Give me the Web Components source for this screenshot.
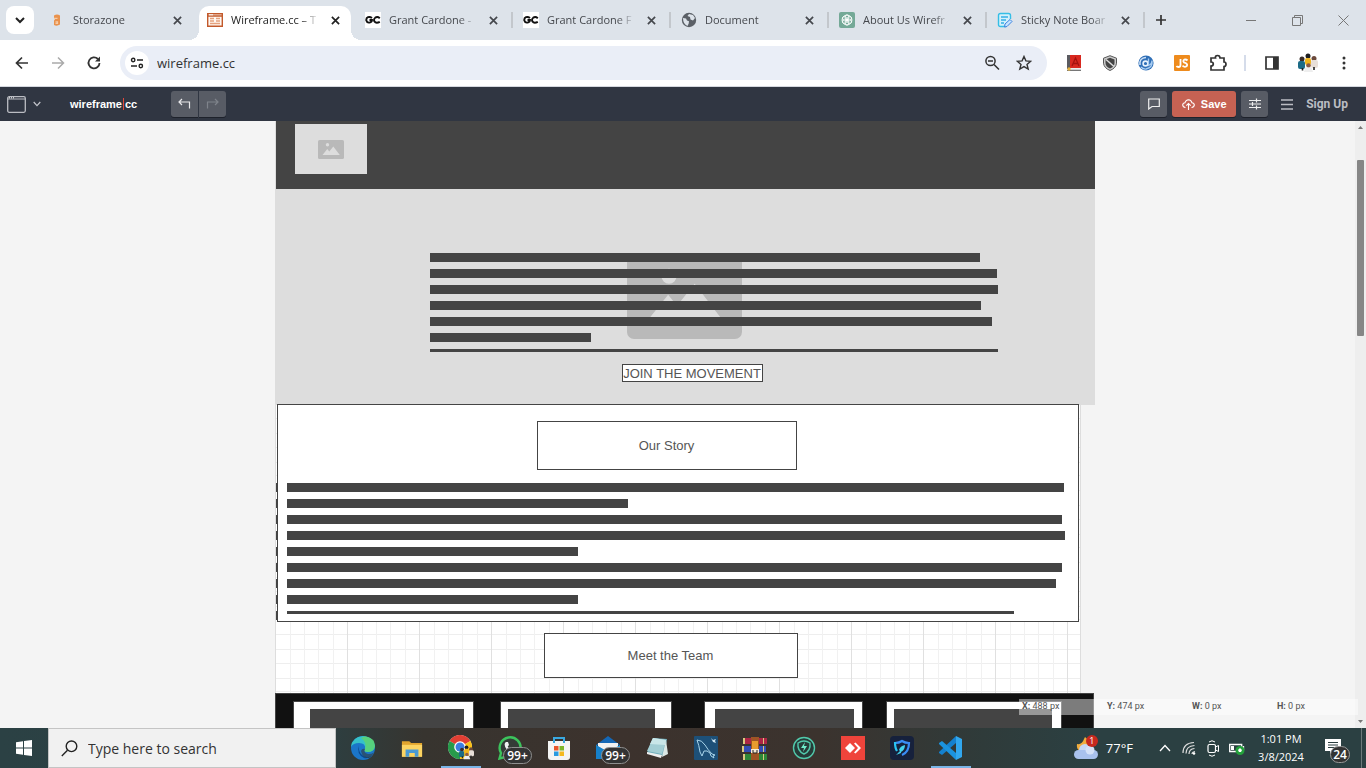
<!DOCTYPE html>
<html lang="en">
<head>
<meta charset="utf-8">
<title>Wireframe.cc</title>
<style>
html,body{margin:0;height:100%}
body{overflow:hidden;font-family:"Open Sans","Noto Sans",sans-serif;font-size:11px;color:#333}
desktop-shell{height:100vh}
</style>
</head>
<body>
<desktop-shell>
  <tab-strip slot="browser">
    <browser-tab icon="storazone">Storazone</browser-tab>
    <browser-tab icon="wire" active>Wireframe.cc – T</browser-tab>
    <browser-tab icon="gc" sep>Grant Cardone -</browser-tab>
    <browser-tab icon="gc" sep>Grant Cardone F</browser-tab>
    <browser-tab icon="globe" sep>Document</browser-tab>
    <browser-tab icon="gpt" sep>About Us Wirefr</browser-tab>
    <browser-tab icon="note" sep>Sticky Note Boar</browser-tab>
  </tab-strip>
  <address-bar slot="browser"></address-bar>
  <app-bar slot="browser"></app-bar>
  <wire-canvas slot="canvas">
    <wf-box x="0" y="0" w="819" h="68" fill="#444"></wf-box>
    <wf-image x="19" y="3" w="72" h="50" icon="26"></wf-image>
    <wf-image x="-1" y="68" w="820" h="216" icon="115"></wf-image>
    <wf-lines x="154" y="132" widths="550,567,568,551,562,161,568"></wf-lines>
    <wf-box x="346" y="243" w="141" h="18" fill="#fff" outlined><wf-button>JOIN THE MOVEMENT</wf-button></wf-box>
    <wf-lines x="0" y="362" widths="2,2,2,2,2,2,2,2,2" full></wf-lines>
    <wf-box x="1" y="283" w="802" h="218" fill="#fff" outlined></wf-box>
    <wf-box x="261" y="300" w="260" h="49" fill="#fff" outlined>Our Story</wf-box>
    <wf-lines x="11" y="362" widths="777,341,775,778,291,775,769,291,727"></wf-lines>
    <wf-box x="268" y="512" w="254" h="45" fill="#fff" outlined>Meet the Team</wf-box>
    <wf-box x="-1" y="572" w="819" h="200" fill="#111" outlined></wf-box>
    <wf-box x="17" y="580" w="181" h="180" fill="#fff" outlined></wf-box>
    <wf-box x="34" y="588" w="154" h="160" fill="#444"></wf-box>
    <wf-box x="224" y="580" w="172" h="180" fill="#fff" outlined></wf-box>
    <wf-box x="232" y="588" w="147" h="160" fill="#444"></wf-box>
    <wf-box x="428" y="580" w="159" h="180" fill="#fff" outlined></wf-box>
    <wf-box x="439" y="588" w="139" h="160" fill="#444"></wf-box>
    <wf-box x="610" y="580" w="176" h="180" fill="#fff" outlined></wf-box>
    <wf-box x="618" y="588" w="158" h="160" fill="#444"></wf-box>
  </wire-canvas>
  <task-bar slot="taskbar">
    <task-app icon="edge" label="Edge"></task-app>
    <task-app icon="files" label="File Explorer"></task-app>
    <task-app icon="chrome" label="Chrome" open></task-app>
    <task-app icon="whatsapp" label="WhatsApp" badge="99+"></task-app>
    <task-app icon="store" label="Store"></task-app>
    <task-app icon="mail" label="Mail" badge="99+"></task-app>
    <task-app icon="notepad" label="Sticky Notes"></task-app>
    <task-app icon="mysql" label="Workbench"></task-app>
    <task-app icon="winrar" label="WinRAR"></task-app>
    <task-app icon="iobit" label="Security"></task-app>
    <task-app icon="anydesk" label="AnyDesk"></task-app>
    <task-app icon="shield" label="Protection"></task-app>
    <task-app icon="vscode" label="Code" open></task-app>
  </task-bar>
</desktop-shell>

<script>
const S = (size, vb, body) => ({ size, vb, body });
const crowd = '<circle cx="4" cy="6" r="2.500" fill="#3a2c28"/><rect y="8" width="7" height="8" rx="2" fill="#1c6b86"/><circle cx="16" cy="5.500" r="2.500" fill="#6b4a3c"/><rect x="13" y="7" width="7" height="8" rx="2" fill="#e8dfd8"/><circle cx="10" cy="3" r="2.500" fill="#1e1e20"/><rect x="7" y="5" width="6" height="7" rx="2" fill="#f0b51c"/><circle cx="10.500" cy="12.500" r="2.300" fill="#8c5b45"/><path d="M7.500 14.500h6l1.500 4.500H6z" fill="#eee"/><path d="M4.500 15v2.500M16 14v3" stroke="#222" stroke-width="1.600"/>';
const ICONS = {
  down: S([12,12],'0 0 12 12','<path d="M2 4l4 4 4-4" fill="none" stroke="#222" stroke-width="2"/>'),
  close: S([9,9],'0 0 10 10','<path d="M1 1l8 8M9 1L1 9" stroke="currentColor" stroke-width="1.900"/>'),
  plus: S([12,12],'0 0 12 12','<path d="M6 1v10M1 6h10" stroke="#333" stroke-width="1.700"/>'),
  min: S([10,10],'0 0 10 10','<path d="M0 5.500h10" stroke="#777"/>'),
  restore: S([11,11],'0 0 11 11','<path d="M.5 2.500h8v8h-8zM2.500 2V.5h8v8H9" fill="none" stroke="#777"/>'),
  winclose: S([11,11],'0 0 11 11','<path d="M.5.5l10 10M10.500.5l-10 10" stroke="#777"/>'),
  storazone: S([16,16],'0 0 16 16','<path d="M5 3.500q3-2 6 0v9q-3 2-6 .5V8.500l1-1-1-1z" fill="#e9924d"/><path d="M5 6.300h3.500M6.500 9.800h2v1.500h-2" fill="none" stroke="#f6cba5" stroke-width="1.200"/>'),
  wire: S([16,16],'0 0 16 16','<path d="M.7 1.700h14.600v12.600H.7zM1 4h14" fill="#fff8f2" stroke="#c2592b" stroke-width="1.400"/><path d="M2 2.800h4" stroke="#fff"/><path d="M3 6.500h4M3 9h4M3 11.500h10M9 6.500h4M9 9h4" stroke="#e5a07c" stroke-width="1.300"/>'),
  gc: S([16,16],'0 0 16 16','<path d="M0 0h16v16H0z" fill="#fff"/><path d="M7 6Q5 4.500 3 5.200 1 6 1.300 8.500 2 11 4.500 10.600 7 10 7 8H4.500M14.800 6.200Q12.500 4.200 10.300 5.600 8.300 7.300 9.400 9.400q1.700 2.500 5.400.4" fill="none" stroke="#111" stroke-width="1.900"/>'),
  globe: S([16,16],'0 0 16 16','<circle cx="8" cy="8" r="7.200" fill="#5b6067"/><path d="M2 6l3 .5 1 2 2 .8-.3 2.200L6.500 14Q2 12 2 6zM8 2l4 1 2 3-2 2.500-2.500-1L9 5 6.500 4z" fill="#dde3ea"/>'),
  gpt: S([16,16],'0 0 16 16','<rect width="16" height="16" rx="2" fill="#74a997"/><g fill="none" stroke="#fff" stroke-width=".8"><ellipse cx="8" cy="5.500" rx="3.500" ry="2.500" transform="rotate(30 8 8)"/><ellipse cx="8" cy="5.500" rx="3.500" ry="2.500" transform="rotate(90 8 8)"/><ellipse cx="8" cy="5.500" rx="3.500" ry="2.500" transform="rotate(150 8 8)"/><ellipse cx="8" cy="5.500" rx="3.500" ry="2.500" transform="rotate(210 8 8)"/><ellipse cx="8" cy="5.500" rx="3.500" ry="2.500" transform="rotate(270 8 8)"/><ellipse cx="8" cy="5.500" rx="3.500" ry="2.500" transform="rotate(330 8 8)"/></g>'),
  note: S([16,16],'0 0 16 16','<path d="M9 14.500H3.500q-2 0-2-2v-9q0-2 2-2h8q2 0 2 2V7" fill="#d3f0fb" stroke="#35bee6" stroke-width="1.400"/><path d="M4 5h7M4 8h5M4 11h3" stroke="#35aee6" stroke-width="1.300"/><path d="M8 12l5-4.500 2 2L10 14.500l-2.500.5z" fill="#c6e4ff" stroke="#3b82e0"/>'),
  back: S([16,16],'0 0 16 16','<path d="M14 8H3M8 2.500L2.500 8 8 13.500" fill="none" stroke="#333" stroke-width="1.700"/>'),
  forward: S([16,16],'0 0 16 16','<path d="M2 8h11M8 2.500L13.500 8 8 13.500" fill="none" stroke="#aaa" stroke-width="1.500"/>'),
  reload: S([16,16],'0 0 16 16','<path d="M13.500 8a5.500 5.500 0 1 1-1.600-4" fill="none" stroke="#333" stroke-width="1.800"/><path d="M14 1.500v5H9z" fill="#333"/>'),
  site: S([14,12],'0 0 14 12','<path d="M7 3h6M1 9h6" stroke="#222" stroke-width="1.700"/><circle cx="3.200" cy="3" r="1.700" fill="none" stroke="#222" stroke-width="1.400"/><circle cx="10.800" cy="9" r="1.700" fill="none" stroke="#222" stroke-width="1.400"/>'),
  zoom: S([16,16],'0 0 16 16','<circle cx="6.500" cy="6" r="4.600" fill="none" stroke="#333" stroke-width="1.500"/><path d="M4 6h5M10 9.500l5 5" stroke="#333" stroke-width="1.600"/>'),
  star: S([16,16],'0 0 16 16','<path d="M8 1.500l1.900 4.400 4.800.4-3.700 3.100 1.200 4.700L8 11.600l-4.200 2.500L5 9.400 1.300 6.300l4.800-.4z" fill="none" stroke="#333" stroke-width="1.400"/>'),
  book: S([16,16],'0 0 16 16','<path d="M1 0h3v14H1z" fill="#5b5b60"/><path d="M4 0h11v13H4z" fill="#d8281f"/><path d="M2 13h13v2H2z" fill="#eee"/><path d="M1 15.300h14" stroke="#555"/><path d="M6 11l3.500-8L13 11M7.300 8.500h4.400" fill="none" stroke="#a5120e" stroke-width="1.300"/><circle cx="3" cy="14" r="1.700" fill="#e8b33a"/>'),
  guard: S([16,16],'0 0 16 16','<path d="M8 .7l6.500 2.500v5Q14 13 8 15.500 2 13 1.500 8.200v-5z" fill="#ccc" stroke="#555"/><path d="M8 2.800l4.500 1.700V8q0 3.500-4.500 5.500Q3.500 11.500 3.500 8V4.500z" fill="#444"/><path d="M4 4.500l8 7" stroke="#ddd" stroke-width="1.500"/>'),
  swirl: S([16,16],'0 0 16 16','<circle cx="8" cy="8" r="7.600" fill="#2f6fb7"/><path d="M2 10Q1 3 8 2.500" fill="none" stroke="#cfe2f7" stroke-width="1.500"/><circle cx="7.500" cy="8.500" r="2.400" fill="none" stroke="#e8f2fd" stroke-width="1.600"/><path d="M10.500 3.500v7q3-1 3.500-5 1 7-6 8.500-3 .3-5-2" fill="none" stroke="#a9cdf2" stroke-width="1.300"/>'),
  js: S([16,16],'0 0 16 16','<rect width="16" height="16" rx="1" fill="#ee8b1d"/><path d="M6.500 4v6q0 2-2 2-1.500 0-2-1M13.500 5.500Q12 4 10.200 4.700 8.500 6 10 7.400l2 .8q2 1.300.5 3.100-2 1.300-4-.6" fill="none" stroke="#fff" stroke-width="1.800"/>'),
  puzzle: S([18,18],'0 0 18 18','<path d="M2 4h4.500Q6 1.500 8.500 1.500T11 4h4v4q2 0 2 2.200T15 12.500V16H2v-4q2.300 0 2.300-2T2 8z" fill="none" stroke="#333" stroke-width="1.700"/>'),
  panel: S([14,14],'0 0 14 14','<path d="M1 1h12v12H1z" fill="none" stroke="#333" stroke-width="1.700"/><path d="M8 1h5v12H8z" fill="#333"/>'),
  avatar: S([20,20],'0 0 20 20',crowd),
  dots: S([4,16],'0 0 4 16','<circle cx="2" cy="3" r="1.500" fill="#333"/><circle cx="2" cy="8" r="1.500" fill="#333"/><circle cx="2" cy="13" r="1.500" fill="#333"/>'),
  window: S([19,17],'0 0 19 17','<rect x=".7" y=".7" width="17.600" height="15.600" rx="1.500" fill="none" stroke="#bbbdc3" stroke-width="1.300"/><path d="M1 3h17" stroke="#bbbdc3"/><path d="M2 1.800h6" stroke="#fff" stroke-dasharray="1 1"/>'),
  smalldown: S([8,6],'0 0 8 6','<path d="M.7 1L4 4.600 7.300 1" fill="none" stroke="#c4c6cc" stroke-width="1.200"/>'),
  undo: S([13,12],'0 0 13 12','<path d="M4 1L1 4l3 3M1 4h10.500v6.500" fill="none" stroke="#e8e8ea" stroke-width="1.200"/>'),
  redo: S([13,12],'0 0 13 12','<path d="M9 1l3 3-3 3M12 4H1.500v6.500" fill="none" stroke="#7f838b" stroke-width="1.200"/>'),
  comment: S([12,12],'0 0 12 12','<path d="M.7 1h10.600v7.500H4L.7 11z" fill="none" stroke="#eee" stroke-width="1.200"/>'),
  cloud: S([13,11],'0 0 13 11','<path d="M3.500 8.500Q.7 8 .7 6q0-2 2.300-2.300Q3.800.8 6.500.7q2.800.1 3.400 3Q12.300 4 12.300 6t-2.800 2.500M6.500 11V4.500M4.300 6.700l2.200-2.200 2.200 2.200" fill="none" stroke="#fff" stroke-width="1.100"/>'),
  sliders: S([12,12],'0 0 12 12','<path d="M0 2.500h12M0 6h12M0 9.500h12M7.500.5v4M3.500 4v4M7.500 7.500v4" stroke="#eee" stroke-width="1.200"/>'),
  burger: S([12,11],'0 0 12 11','<path d="M0 1h12M0 5.500h12M0 10h12" stroke="#bbbdc3" stroke-width="1.300"/>'),
  picture: S([26,19],'0 0 26 19','<rect width="26" height="19" rx="1.600" fill="#b9b9b9"/><circle cx="9.500" cy="4.800" r="1.700" fill="#ddd"/><path d="M4.500 15l4.800-6 2 2.500 4-5 6.500 8.500z" fill="#ddd"/>'),
  win: S([16,16],'0 0 16 16','<path d="M0 2.300L7 1.200v6.300H0zM8 1l8-1v7.500H8zM0 8.500h7v6.300l-7-1zM8 8.500h8V16l-8-1.100z" fill="#fff"/>'),
  search: S([17,17],'0 0 17 17','<circle cx="10.500" cy="6.300" r="5.300" fill="none" stroke="#222" stroke-width="1.400"/><path d="M6.500 10.300L.8 16" stroke="#222" stroke-width="1.400"/>'),
  edge: S([24,24],'0 0 24 24','<circle cx="12" cy="12" r="12" fill="#1b76c9"/><path d="M0 11Q1 1 12 0q11 1 12 10-1 6-7 6-5 0-3-3 1-6-6-6-6 0-8 4z" fill="#35c1c9"/><path d="M14 .3q10 1.500 10 10-1 5.700-7 5.700-5 0-3-3 2-7-4-11z" fill="#5fd36a" opacity=".8"/><path d="M8 9q-3 9 5 13 4 1 8-2-7 3-11-2-3-4-2-9z" fill="#0c4a8f"/><path d="M14 13q-2 4 3 5 3 .3 6-1.500-2 4-5 5.500-7 0-8-7 1-3 4-2z" fill="#34352f" opacity=".55"/>'),
  files: S([22,19],'0 0 24 20','<path d="M1 2h8l2 2h12v15H1z" fill="#e2a52e"/><path d="M1 6h22v13H1z" fill="#fcd462"/><path d="M5 19v-8h14v8h-4v-4H9v4z" fill="#4a9ad4"/>'),
  chrome: S([26,26],'0 0 26 26','<circle cx="12" cy="12" r="12" fill="#e8e8e8"/><path d="M12 12L1.600 6A12 12 0 0 1 22.400 6z" fill="#e23f33"/><path d="M12 12L1.600 6A12 12 0 0 0 12 24z" fill="#279a4b"/><path d="M12 12l10.400-6A12 12 0 0 1 12 24z" fill="#fbc116"/><circle cx="12" cy="12" r="5.800" fill="#fff"/><circle cx="12" cy="12" r="4.500" fill="#3d7de0"/><g transform="translate(11 10) scale(.75)">'+crowd+'</g>'),
  whatsapp: S([24,24],'0 0 24 24','<path d="M1.500 22.500L3 17a10.500 10.500 0 1 1 4 4z" fill="#343c37" stroke="#3cc35c" stroke-width="2.400"/><path d="M8 6q-3 2 .5 7t8.500 4q2-2 0-3.500l-2-.5-1.500 1.500Q11 13 9.700 10.500L11 9l-1-3z" fill="#f2f2f2"/>'),
  store: S([24,24],'0 0 24 24','<path d="M7 7V2h10v5" fill="none" stroke="#39a8e0" stroke-width="2"/><path d="M1 5h22v16q0 3-3 3H4q-3 0-3-3z" fill="#f4f4f4"/><path d="M7 5v2M17 5v2" stroke="#39a8e0" stroke-width="2"/><path d="M7 10h4.500v4.500H7z" fill="#e8552b"/><path d="M12.500 10H17v4.500h-4.500z" fill="#7db52b"/><path d="M7 15.500h4.500V20H7z" fill="#2a9ae0"/><path d="M12.500 15.500H17V20h-4.500z" fill="#f5b91f"/>'),
  mail: S([24,24],'0 0 24 24','<path d="M0 9l12-9 12 9z" fill="#1467b5"/><path d="M2 7h20v14H2z" fill="#f1f1f1"/><path d="M0 9l12 7 12-7v14H0z" fill="#2a9ee3"/><path d="M0 9l24 14H0z" fill="#1680ca"/>'),
  notepad: S([24,24],'0 0 24 24','<path d="M8 2l14 1-3 17-17-3z" fill="#71aebb"/><path d="M8 2l13 2-4 14L2 15z" fill="#a3ced4"/><path d="M8 2l13 2-1 5L5 8z" fill="#c9e6e8"/><path d="M2 16l15 3-1 3-14-4z" fill="#eee"/><path d="M21 4l2 14-6 3z" fill="#dce8e5"/>'),
  mysql: S([24,24],'0 0 24 24','<rect width="24" height="24" rx="1" fill="#1d5078"/><path d="M3 4q5 0 8 5t7 9l3 1-2 1 1 2-3-2-1-3-3-2-3 0-2 5-2-4Q5 9 3 4z" fill="none" stroke="#a8d4ea"/><path d="M17 2l2 2 3-1-1 2 1 2-3-1-1-2z" fill="#cfe6f2"/>'),
  winrar: S([25,23],'0 0 25 23','<path d="M1 1h24v6H1z" fill="#ad2545"/><path d="M0 9h24v6H0z" fill="#334db4"/><path d="M1 17h24v6H1z" fill="#2d8738"/><path d="M1 1h2v6H1zM21 1h1v6h-1zM0 9h2v6H0zM21 9h1v6h-1zM1 17h2v6H1zM21 17h1v6h-1z" fill="#dac880"/><path d="M9 0h8v23H9z" fill="#9e5425"/><path d="M10 4h6v8h-6z" fill="#e99b2e"/><path d="M9 12h8v4H9z" fill="#f7ead4"/><path d="M11 13v3h4v-3" fill="none" stroke="#222"/>'),
  iobit: S([24,24],'0 0 24 24','<circle cx="12" cy="12" r="10.500" fill="#263b38" stroke="#51c9ab" stroke-width="1.400"/><path d="M6 7q6-4 12 0 1 8-6 11-7-3-6-11z" fill="none" stroke="#51c9ab" stroke-width="1.400"/><path d="M13 6l-4 6h3l-1 4 4-6h-3z" fill="#6eeccb"/>'),
  anydesk: S([24,24],'0 0 24 24','<path d="M0 0h24v24H0z" fill="#ef443b"/><path d="M4 12l5-5 5 5-5 5z" fill="#fff"/><path d="M13 7.500l1.500-1L20 12l-5.500 5.500-1.500-1 4-4.500z" fill="#fff"/>'),
  shield: S([24,24],'0 0 24 24','<rect width="24" height="24" rx="4" fill="#16213c"/><path d="M5 7q4 0 7-2 3 2 7 2 0 9-7 12" fill="none" stroke="#3a8df5" stroke-width="2.200"/><path d="M5 6q0 6 2 9" fill="none" stroke="#29c5f4" stroke-width="2.200"/><path d="M11 14l-5 5 5-2zM15 9q-5 1-6 5l2 2q4-2 4-7z" fill="#43d3ee"/>'),
  vscode: S([24,24],'0 0 24 24','<path d="M17 0l6 3v18l-6 3z" fill="#31a7ee"/><path d="M17 0v7L3 19l-3-2v-1z" fill="#1481cf"/><path d="M17 24v-7L3 5 0 7v1z" fill="#1b93df"/>'),
  weather: S([25,24],'0 0 25 24','<path d="M3 8q5 1 7-5l1-2q6 4 3 11-3 5-8 3-4-2-3-7z" fill="#f1ad3d"/><circle cx="11" cy="14" r="6" fill="#c7d8f4"/><rect y="14" width="24" height="9" rx="4.500" fill="#a9c2ed"/><circle cx="16" cy="14" r="4.500" fill="#d5e2f7"/>'),
  up: S([12,8],'0 0 12 8','<path d="M1 7l5-5.500L11 7" fill="none" stroke="#fff" stroke-width="1.300"/>'),
  wifi: S([14,14],'0 0 14 14','<path d="M1 12Q1 2 12 1.500M4 12.500Q4 5 12.500 4.500M7 13q0-5 5.500-5.500M10 13q0-2 3-2.500" fill="none" stroke="#ddd" stroke-width="1.200"/><circle cx="12" cy="12.500" r="1.300" fill="#fff"/>'),
  meet: S([12,17],'0 0 12 17','<rect x="1" y="4.500" width="7.500" height="8" rx="1.500" fill="none" stroke="#fff" stroke-width="1.200"/><path d="M8.500 7l3-1.500v6l-3-1.500M2 2Q5-.5 8 2M2 15q3 2.500 6 0" fill="none" stroke="#fff"/>'),
  battery: S([16,13],'0 0 16 13','<path d="M.7 2.500h12v7h-12zM14.500 4v4" fill="none" stroke="#fff" stroke-width="1.300"/><path d="M2 4h3v4H2z" fill="#fff"/><circle cx="11" cy="8.500" r="4.500" fill="#24a13c"/><path d="M11 6l2 2-1 2h-2L9 8z" fill="#fff"/>'),
  notice: S([16,15],'0 0 16 15','<path d="M0 0h16v12H8l-3 3v-3H0z" fill="#fff"/><path d="M3 3.500h10M3 6h10M3 8.500h7" stroke="#2c3f40"/>'),
  triup: S([5,3],'0 0 5 3','<path d="M0 3L2.500 0 5 3z" fill="#777"/>'),
  tridown: S([5,3],'0 0 5 3','<path d="M0 0l2.500 3L5 0z" fill="#777"/>')
};

/* Shared base: puts css and markup of a class into an open shadow root. */
class Part extends HTMLElement {
  connectedCallback() {
    if (this.shadowRoot) return;
    this.attachShadow({ mode: 'open' }).innerHTML =
      '<style>:host,*{box-sizing:border-box}button{font:inherit;color:inherit;border:0;padding:0;margin:0;background:none;display:flex;align-items:center;justify-content:center}' +
      this.css() + '</style>' + this.html();
  }
  attr(name, fallback = '') { return this.hasAttribute(name) ? this.getAttribute(name) : fallback; }
  css() { return ''; }
  html() { return '<slot></slot>'; }
}
const define = (name, c) => customElements.define(name, c);

define('ui-icon', class extends Part {
  css() {
    const i = ICONS[this.attr('name')], w = Number(this.attr('width', i.size[0]));
    return `:host{display:block;flex:none;width:${w}px;height:${Math.round(w * i.size[1] / i.size[0])}px}svg{display:block;width:100%;height:100%}`;
  }
  html() { const i = ICONS[this.attr('name')]; return `<svg viewBox="${i.vb}" aria-hidden="true">${i.body}</svg>`; }
});

define('desktop-shell', class extends Part {
  css() { return ':host{display:flex;flex-direction:column}main{flex:1;min-height:0;display:flex}'; }
  html() { return '<slot name="browser"></slot><main><slot name="canvas"></slot></main><slot name="taskbar"></slot>'; }
});

define('tab-strip', class extends Part {
  css() { return `:host{display:flex;flex:none;height:40px;background:#dde3ea;align-items:flex-end}
    .menu{width:28px;height:28px;border-radius:8px;background:#fff;margin:0 7px 6px 6px}
    .tabs{display:flex;align-items:flex-end}
    .add{width:28px;height:28px;margin-bottom:6px}
    .win{margin-left:auto;display:flex;align-self:stretch}.win button{width:46px}`; }
  html() { return `<button class="menu" aria-label="Search tabs"><ui-icon name="down"></ui-icon></button>
    <div class="tabs"><slot></slot></div>
    <button class="add" aria-label="New tab"><ui-icon name="plus"></ui-icon></button>
    <div class="win"><button aria-label="Minimize"><ui-icon name="min"></ui-icon></button><button aria-label="Restore"><ui-icon name="restore"></ui-icon></button><button aria-label="Close"><ui-icon name="winclose"></ui-icon></button></div>`; }
});

define('browser-tab', class extends Part {
  css() { return `:host{display:flex;position:relative;align-items:center;width:158px;height:34px;padding:0 0 6px 8px;color:#45484d}
    :host([active]){background:#fff;border-radius:10px 10px 0 0;width:152px;margin-right:6px;color:#222}
    :host([active])::before,:host([active])::after{content:"";position:absolute;bottom:0;width:10px;height:10px}
    :host([active])::before{left:-10px;background:radial-gradient(circle at 0 0,transparent 10px,#fff 10px)}
    :host([active])::after{right:-10px;background:radial-gradient(circle at 100% 0,transparent 10px,#fff 10px)}
    ui-icon{margin-right:8px}
    .t{width:88px;overflow:hidden;white-space:nowrap;line-height:16px;-webkit-mask:linear-gradient(90deg,#000 70px,transparent 88px)}
    button{width:28px;height:28px;margin-left:2px}button ui-icon{margin:0}
    :host([sep])::after{content:"";width:2px;height:16px;background:#c3c7cc;margin-left:4px}`; }
  html() { return `<ui-icon name="${this.attr('icon')}"></ui-icon><span class="t"><slot></slot></span><button aria-label="Close tab"><ui-icon name="close"></ui-icon></button>`; }
});

define('address-bar', class extends Part {
  css() { return `:host{display:flex;flex:none;align-items:center;height:47px;padding:0 4px;background:#fff;border-bottom:1px solid #d5d8df}
    button{width:36px;height:36px;flex:none}
    .omni{flex:1;display:flex;align-items:center;height:34px;margin:0 9px 0 8px;border-radius:17px;background:#eaeef7;padding-right:7px}
    .site{width:24px;height:24px;border-radius:12px;background:#fff;margin:0 8px 0 5px}
    .omni .act{width:32px}
    input{flex:1;min-width:0;border:0;background:none;padding:0;font:13px "Open Sans","Noto Sans",sans-serif;color:#333}
    i{width:2px;height:16px;margin:0 8px;background:#d5dcea}`; }
  html() {
    const b = (n, l, c = '') => `<button class="${c}" aria-label="${l}"><ui-icon name="${n}"></ui-icon></button>`;
    return b('back','Back') + b('forward','Forward') + b('reload','Reload') +
      `<div class="omni">${b('site','Site information','site')}<input aria-label="Address" value="wireframe.cc">${b('zoom','Zoom','act')}${b('star','Bookmark','act')}</div>` +
      b('book','Dictionary') + b('guard','Blocker') + b('swirl','Extension') + b('js','Script switch') + b('puzzle','Extensions') +
      '<i></i>' + b('panel','Side panel') + b('avatar','Profile') + b('dots','Menu');
  }
});

define('app-bar', class extends Part {
  css() { return `:host{display:flex;flex:none;align-items:center;height:34px;padding:0 18px 0 7px;background:#303642;font:bold 11px "Liberation Sans",Arial,sans-serif;color:#fff}
    .view{gap:7px;height:26px}
    a{color:inherit;text-decoration:none}
    .logo{margin:0 34px 0 29px;display:flex}.logo i{width:1px;height:12px;margin:0 1px;background:#e0483c}
    .b{width:27px;height:26px;background:#585c65;border-radius:3px;box-shadow:0 1px #1e222b}
    .l{border-radius:3px 0 0 3px;margin-right:1px}.r{border-radius:0 3px 3px 0}
    .right{margin-left:auto;display:flex;align-items:center;gap:5px}
    .save{width:64px;background:#c66253;gap:6px}
    .burger{margin:0 8px}
    .sign{color:#bbbdc3;font-size:12px;font-family:Roboto,sans-serif}`; }
  html() { return `<button class="view" aria-label="View"><ui-icon name="window"></ui-icon><ui-icon name="smalldown"></ui-icon></button>
    <a class="logo" href="#"><span>wireframe</span><i></i><span>cc</span></a>
    <button class="b l" aria-label="Undo"><ui-icon name="undo"></ui-icon></button><button class="b r" aria-label="Redo"><ui-icon name="redo"></ui-icon></button>
    <div class="right"><button class="b" aria-label="Comment"><ui-icon name="comment"></ui-icon></button><button class="b save"><ui-icon name="cloud"></ui-icon>Save</button><button class="b" aria-label="Settings"><ui-icon name="sliders"></ui-icon></button><button class="burger" aria-label="Menu"><ui-icon name="burger"></ui-icon></button><a class="sign" href="#">Sign Up</a></div>`; }
});

define('wire-canvas', class extends Part {
  css() { return `:host{display:flex;flex:1;min-width:0;position:relative;background:#f4f4f4;overflow:hidden}
    .view{flex:1;min-width:0;overflow:hidden;display:flex;justify-content:center}
    .page{position:relative;flex:none;width:806px;border:solid #ddd;border-width:0 1px;
      background:linear-gradient(90deg,transparent 71px,#e0e0e0 71px) 0 0/72px 100%,
      linear-gradient(90deg,transparent 14px,#f1f1f1 14px,#f1f1f1 15px,transparent 15px,transparent 28px,#f1f1f1 28px,#f1f1f1 29px,transparent 29px,transparent 42px,#f1f1f1 42px,#f1f1f1 43px,transparent 43px,transparent 57px,#f1f1f1 57px,#f1f1f1 58px,transparent 58px) 0 0/72px 100%,
      linear-gradient(transparent 14px,#eee 14px,#eee 15px,transparent 15px,transparent 29px,#eee 29px,#eee 30px,transparent 30px,transparent 43px,#eee 43px,#eee 44px,transparent 44px,transparent 58px,#eee 58px,#eee 59px,transparent 59px,transparent 71px,#eee 71px) 0 67px/100% 72px,#fff}
    .bar{width:11px;background:#eee;display:flex;flex-direction:column;align-items:center;justify-content:space-between;padding:5px 0}
    .thumb{flex:none;width:7px;height:176px;border-radius:1px;background:#868686;margin-top:31px;margin-bottom:auto}
    .coords{position:absolute;right:8px;bottom:13px;width:339px;height:16px;background:rgba(255,255,255,.45);display:grid;grid-template-columns:repeat(4,85px);padding-left:3px;font:9px/14px Roboto,sans-serif;color:#555}
    b{font-weight:700}`; }
  html() { return `<div class="view"><div class="page"><slot></slot></div></div>
    <div class="bar"><ui-icon name="triup"></ui-icon><div class="thumb"></div><ui-icon name="tridown"></ui-icon></div>
    <div class="coords"><span><b>X:</b> 488 px</span><span><b>Y:</b> 474 px</span><span><b>W:</b> 0 px</span><span><b>H:</b> 0 px</span></div>`; }
});

/* Stencils dropped on the canvas: x and y are their place on the drawn page. */
class Stencil extends Part {
  place() { return `position:absolute;left:${this.attr('x')}px;top:${this.attr('y')}px;`; }
  size() { return `width:${this.attr('w')}px;height:${this.attr('h')}px;`; }
}
define('wf-box', class extends Stencil {
  css() { return `:host{${this.place()}${this.size()}background:${this.attr('fill')};display:flex;align-items:center;justify-content:center;font:13px "Liberation Sans",Arial,sans-serif;color:#555}:host([outlined]){border:1px solid #444}`; }
});
define('wf-image', class extends Stencil {
  css() { return `:host{${this.place()}${this.size()}background:#ddd;display:flex;align-items:center;justify-content:center}`; }
  html() { return `<ui-icon name="picture" width="${this.attr('icon')}"></ui-icon>`; }
});
define('wf-lines', class extends Stencil {
  css() { return `:host{${this.place()}display:grid;gap:7px}i{height:9px;background:#444}:host(:not([full])) i:last-child{height:3px}`; }
  html() { return this.attr('widths').split(',').map(w => `<i style="width:${w}px"></i>`).join(''); }
});
define('wf-button', class extends Part {
  css() { return ':host{display:block}button{white-space:nowrap}'; }
  html() { return '<button><slot></slot></button>'; }
});

define('task-bar', class extends Part {
  css() { return `:host{display:flex;flex:none;height:40px;background:linear-gradient(90deg,#2b4144 0,#2d3f41 24%,#37342f 31%,#3c322d 45%,#3b332e 60%,#2f3b3a 72%,#2b4042 80%,#2b4042);color:#fff}
    .start{width:48px}
    .find{display:flex;align-items:center;width:288px;gap:10px;padding-left:12px;background:#f1f1f1;border:1px solid #c4c4c4}
    .find input{flex:1;min-width:0;border:0;background:none;padding:0;font:14px "Open Sans","Noto Sans",sans-serif;color:#222}
    .find input::placeholder{color:#333;opacity:1}
    .apps{display:flex;padding-left:2px}
    .tray{margin-left:auto;display:flex;align-items:center}
    .tray>button{width:24px;height:40px}
    .tray>.weather{width:auto;gap:7px;margin-right:20px;font-size:13px;position:relative}
    .one{position:absolute;left:12px;top:7px;width:12px;height:12px;border-radius:6px;background:#c7291e;font-size:9px;line-height:12px}
    .tray>.clock{width:64px;flex-direction:column;font-size:11px;line-height:18px}
    .tray>.note{width:48px;position:relative;padding-bottom:4px;padding-right:8px}
    .n{position:absolute;left:17px;top:18px;width:20px;height:17px;border:1px solid #999;border-radius:9px;background:#333;font:600 12px/15px "Open Sans",sans-serif}
    .end{width:5px;height:40px;border-left:1px solid #6c7a7b}`; }
  html() { return `<button class="start" aria-label="Start"><ui-icon name="win"></ui-icon></button>
    <label class="find"><ui-icon name="search"></ui-icon><input aria-label="Search" placeholder="Type here to search"></label>
    <div class="apps"><slot></slot></div>
    <div class="tray"><button class="weather"><ui-icon name="weather"></ui-icon><span class="one">1</span><span>77°F</span></button>
    <button aria-label="Hidden icons"><ui-icon name="up"></ui-icon></button><button aria-label="Network"><ui-icon name="wifi"></ui-icon></button><button aria-label="Meet now"><ui-icon name="meet"></ui-icon></button><button aria-label="Battery"><ui-icon name="battery"></ui-icon></button>
    <button class="clock"><span>1:01 PM</span><span>3/8/2024</span></button>
    <button class="note" aria-label="Notifications"><ui-icon name="notice"></ui-icon><span class="n">24</span></button><div class="end"></div></div>`; }
});

define('task-app', class extends Part {
  css() { return `:host{display:block;position:relative;width:49px;height:40px}
    button{width:100%;height:100%}
    :host([open])::after{content:"";position:absolute;left:5px;right:4px;bottom:0;height:2px;background:#79b4e6}
    .badge{position:absolute;left:18px;top:19px;width:29px;height:17px;border:1px solid #8f8f8f;border-radius:9px;background:#333;font:600 12px/15px "Open Sans",sans-serif;text-align:center}`; }
  html() { return `<button aria-label="${this.attr('label')}"><ui-icon name="${this.attr('icon')}"></ui-icon>${this.hasAttribute('badge') ? `<span class="badge">${this.attr('badge')}</span>` : ''}</button>`; }
});
</script>
</body>
</html>
